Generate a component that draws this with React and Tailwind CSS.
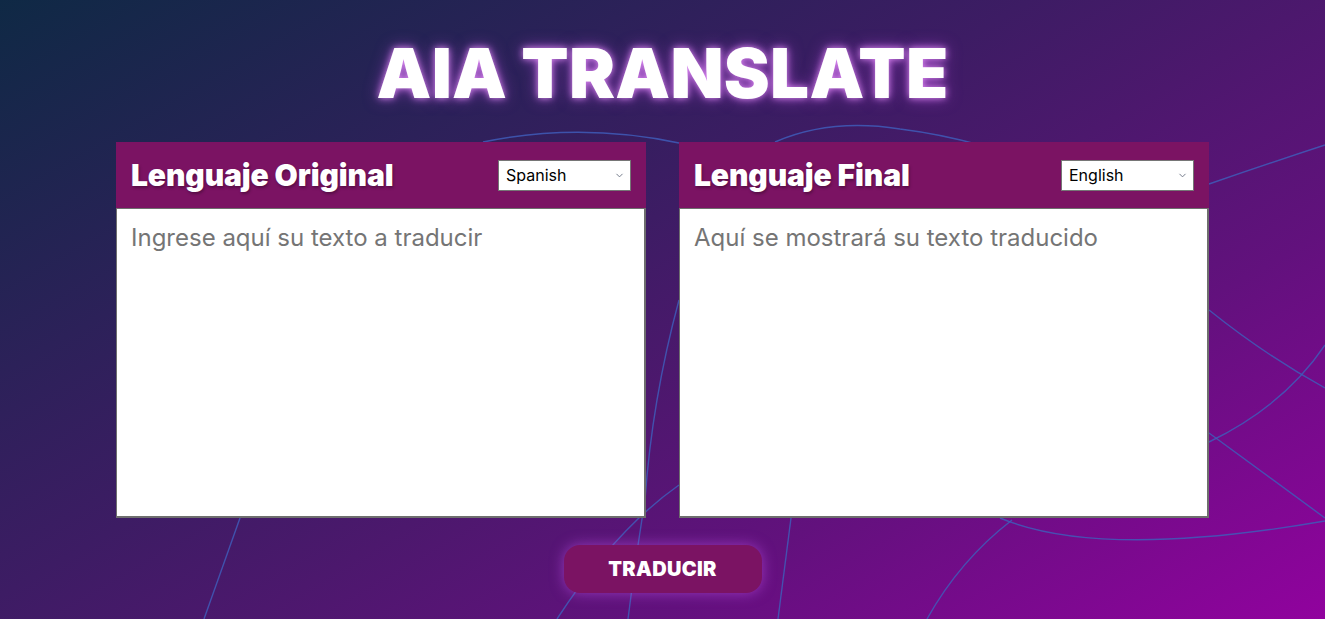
import { useState } from 'react'
import { ChevronDown } from 'lucide-react'

const IDIOMAS = ['Spanish', 'English', 'French', 'German', 'Italian', 'Portuguese']

function Lineas() {
  return (
    <svg viewBox="0 0 1325 619" preserveAspectRatio="none"
      className="absolute inset-0 w-full h-full pointer-events-none" fill="none"
      stroke="#3f5cb8" strokeWidth="1.4" strokeOpacity="0.85">
      <path d="M483 142 Q580 122 679 143" />
      <path d="M775 142 Q830 118 900 129 Q940 134 980 145" />
      <path d="M1209 184 Q1270 163 1325 145" />
      <path d="M1209 310 Q1265 355 1325 388" />
      <path d="M1209 442 Q1285 405 1325 345" />
      <path d="M1209 433 Q1270 478 1325 518" />
      <path d="M1000 518 Q1100 560 1325 521" />
      <path d="M240 518 L204 619" />
      <path d="M679 300 Q652 400 645 500 Q635 560 628 619" />
      <path d="M679 485 Q615 530 557 619" />
      <path d="M791 518 L778 619" />
      <path d="M1012 520 Q960 560 927 619" />
    </svg>
  )
}

function Panel({ titulo, idioma, setIdioma, placeholder, readOnly }) {
  return (
    <div className="w-[530px] flex flex-col">
      <div className="h-[66px] bg-[#7b1363] flex items-center justify-between px-[15px]">
        <h2 className="text-[30px] font-black text-white tracking-[-0.1px] [text-shadow:1px_2px_3px_rgba(0,0,0,0.3)]">
          {titulo}
        </h2>
        <div className="relative">
          <select value={idioma} onChange={e => setIdioma(e.target.value)}
            className="w-[133px] h-[31px] bg-white text-black text-[16px] border border-[#767676] pl-[7px] appearance-none focus:outline-none">
            {IDIOMAS.map(i => <option key={i} value={i}>{i}</option>)}
          </select>
          <ChevronDown size={11} strokeWidth={2} className="absolute right-[6px] top-[10px] text-gray-500 pointer-events-none" />
        </div>
      </div>
      <textarea readOnly={readOnly} placeholder={placeholder}
        className="h-[310px] bg-white border border-r-2 border-b-2 border-[#6e6e6e] px-[14px] py-[13px] text-[24px] leading-[32px] text-gray-800 placeholder:text-[#757575] resize-none focus:outline-none" />
    </div>
  )
}

export default function App() {
  const [origen, setOrigen] = useState('Spanish')
  const [destino, setDestino] = useState('English')

  return (
    <div className="relative min-h-screen h-[619px] overflow-hidden bg-[linear-gradient(150deg,#0f2945_0%,#2c2159_27%,#3d1c64_43%,#4c186d_55%,#62117d_72%,#91029e_100%)] font-['Inter',sans-serif]">
      <Lineas />
      <div className="relative flex flex-col items-center">
        <h1 className="mt-[36px] h-[74px] text-[69px] leading-[74px] font-black text-white tracking-[0.3px] [text-shadow:0_0_7px_rgba(235,150,255,0.9),0_0_16px_rgba(200,80,240,0.55)]">
          AIA TRANSLATE
        </h1>
        <div className="mt-[32px] flex gap-[33px]">
          <Panel titulo="Lenguaje Original" idioma={origen} setIdioma={setOrigen}
            placeholder="Ingrese aquí su texto a traducir" />
          <Panel titulo="Lenguaje Final" idioma={destino} setIdioma={setDestino}
            placeholder="Aquí se mostrará su texto traducido" readOnly />
        </div>
        <button className="mt-[27px] w-[198px] h-[48px] rounded-2xl bg-[#7b1363] text-white text-[20px] font-black tracking-[0.3px] shadow-[0_0_14px_rgba(190,80,230,0.6)]">
          TRADUCIR
        </button>
      </div>
    </div>
  )
}
